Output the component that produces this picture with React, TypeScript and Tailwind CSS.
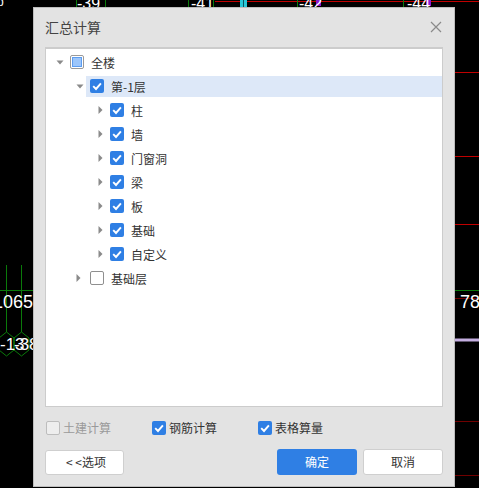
import React from "react";

const FONT = "font-['Noto_Sans_CJK_SC','Liberation_Sans',sans-serif]";

function Check() {
  return (
    <svg viewBox="0 0 14 14" className="w-[14px] h-[14px]" fill="none">
      <path d="M3.2 7.2 L6 10 L10.9 4.4" stroke="#fff" strokeWidth="1.9" />
    </svg>
  );
}

function Box({ state }: { state: "on" | "off" | "mixed" | "disabled" }) {
  if (state === "on")
    return (
      <span className="block w-[14px] h-[14px] shrink-0 rounded-[2px] bg-[#2f7fe4]">
        <Check />
      </span>
    );
  if (state === "mixed")
    return (
      <span className="flex items-center justify-center w-[14px] h-[14px] shrink-0 rounded-[2px] border border-[#9a9a9a] bg-white">
        <span className="block w-[10px] h-[10px] bg-[#9cc6fb] border border-[#5d9df0]" />
      </span>
    );
  if (state === "disabled")
    return <span className="block w-[14px] h-[14px] shrink-0 rounded-[2px] border border-[#bdbdbd] bg-[#eeeeee]" />;
  return <span className="block w-[14px] h-[14px] shrink-0 rounded-[2px] border border-[#8f8f8f] bg-white" />;
}

function Arrow({ open }: { open: boolean }) {
  return open ? (
    <svg viewBox="0 0 8 5" className="w-[8px] h-[5px] shrink-0">
      <path d="M0.5 0.5 H7.5 L4 4.5 Z" fill="#8a8a8a" />
    </svg>
  ) : (
    <svg viewBox="0 0 5 8" className="w-[5px] h-[8px] shrink-0">
      <path d="M0.5 0 V8 L4.5 4 Z" fill="#8a8a8a" />
    </svg>
  );
}

type Row = { label: string; level: 0 | 1 | 2; open: boolean; state: "on" | "off" | "mixed"; selected?: boolean };

const rows: Row[] = [
  { label: "全楼", level: 0, open: true, state: "mixed" },
  { label: "第-1层", level: 1, open: true, state: "on", selected: true },
  { label: "柱", level: 2, open: false, state: "on" },
  { label: "墙", level: 2, open: false, state: "on" },
  { label: "门窗洞", level: 2, open: false, state: "on" },
  { label: "梁", level: 2, open: false, state: "on" },
  { label: "板", level: 2, open: false, state: "on" },
  { label: "基础", level: 2, open: false, state: "on" },
  { label: "自定义", level: 2, open: false, state: "on" },
  { label: "基础层", level: 1, open: false, state: "off" },
];

const indent = ["pl-[10px]", "pl-[30px]", "pl-[52px]"];
const arrowSlot = ["w-[14px]", "w-[14px]", "w-[12px]"];

function TreeRow({ row }: { row: Row }) {
  return (
    <div className={`flex items-center h-[24px] ${indent[row.level]}`}>
      <span className={`flex items-center shrink-0 ${arrowSlot[row.level]}`}>
        <Arrow open={row.open} />
      </span>
      <div className={`flex items-center grow h-[21px] -ml-[4px] pl-[4px] ${row.selected ? "bg-[#dde8f8]" : ""}`}>
        <Box state={row.state} />
        <span className="ml-[7px] text-[12px] leading-[21px] text-[#333333]">{row.label}</span>
      </div>
    </div>
  );
}

function Option({ state, label, className }: { state: "on" | "disabled"; label: string; className: string }) {
  return (
    <div className={`flex items-center ${className}`}>
      <Box state={state} />
      <span className={`ml-[3px] text-[12px] leading-[14px] ${state === "disabled" ? "text-[#9a9a9a]" : "text-[#333333]"}`}>{label}</span>
    </div>
  );
}

function CadBackground() {
  return (
    <svg className="absolute inset-0" width="479" height="488" viewBox="0 0 479 488">
      <g stroke="#c00000" strokeWidth="1">
        <line x1="215" y1="1.5" x2="479" y2="1.5" />
        <line x1="455" y1="72.5" x2="479" y2="72.5" />
        <line x1="455" y1="156.5" x2="479" y2="156.5" />
        <line x1="455" y1="224.5" x2="479" y2="224.5" />
        <line x1="455" y1="298.5" x2="479" y2="298.5" stroke="#700000" />
        <line x1="455" y1="421.5" x2="479" y2="421.5" stroke="#700000" />
        <line x1="455" y1="475.5" x2="479" y2="475.5" stroke="#700000" />
      </g>
      <g stroke="#0a7a0a" fill="none">
        <line x1="455" y1="290.5" x2="479" y2="290.5" />
        <line x1="0" y1="290.5" x2="33" y2="290.5" />
        <line x1="6.5" y1="265" x2="6.5" y2="332" />
        <line x1="21.5" y1="265" x2="21.5" y2="332" />
        <path d="M6.5 332 L14 338 V350 L6.5 356 L-1 350 V338 Z M21.5 332 L29 338 V350 L21.5 356 L14 350 V338 Z" />
        <path d="M76.5 0 V7 M105.5 0 V7 M188.5 0 V7 M213.5 0 V7 M297.5 0 V7 M403.5 0 V7" />
      </g>
      <line x1="455" y1="340" x2="479" y2="340" stroke="#c4aee0" strokeWidth="3" />
      <rect x="240" y="0" width="7" height="7" fill="#28c8d8" />
      <rect x="243" y="0" width="1" height="7" fill="#0a5560" />
      <rect x="316" y="0" width="5" height="6" fill="#8a18d0" />
      <rect x="426" y="0" width="5" height="6" fill="#8a18d0" />
      <g fill="#ffffff" fontFamily="'Liberation Sans', sans-serif">
        <text x="-3" y="6" fontSize="12">p</text>
        <text x="77" y="9" fontSize="16">-39</text>
        <text x="191" y="9" fontSize="16">-41</text>
        <text x="299" y="9" fontSize="16">-42</text>
        <text x="407" y="9" fontSize="16">-44</text>
        <text x="-7" y="308" fontSize="18">1065</text>
        <text x="460" y="308" fontSize="18">78</text>
        <text x="0" y="350" fontSize="17">-13</text>
        <text x="14" y="350" fontSize="17">-38</text>
      </g>
    </svg>
  );
}

export default function App() {
  return (
    <div className={`relative w-[479px] h-[488px] overflow-hidden bg-black ${FONT}`}>
      <CadBackground />
      <div className="absolute left-[33px] top-[7px] w-[422px] h-[480px] flex flex-col bg-[#e3e3e3] border border-[#bdbdbd] pl-[11px] pr-[11px]">
        <div className="flex items-center justify-between h-[39px] shrink-0 pb-[1px]">
          <span className="text-[14px] leading-[20px] text-[#444444]">汇总计算</span>
          <svg viewBox="0 0 12 12" className="w-[12px] h-[12px] mr-[1px]" fill="none" stroke="#8a8a8a" strokeWidth="1.2">
            <path d="M1 1 L11 11 M11 1 L1 11" />
          </svg>
        </div>
        <div className="h-[360px] shrink-0 bg-white border border-[#cccccc] border-t-2 pt-[1px]">
          {rows.map((r) => (
            <TreeRow key={r.label} row={r} />
          ))}
        </div>
        <div className="flex items-center h-[14px] mt-[14px] shrink-0 pl-[1px]">
          <Option state="disabled" label="土建计算" className="w-[106px]" />
          <Option state="on" label="钢筋计算" className="w-[106px]" />
          <Option state="on" label="表格算量" className="w-[106px]" />
        </div>
        <div className="flex items-center mt-[14px] shrink-0">
          <button className="w-[79px] h-[25px] pl-[3px] rounded-[3px] bg-white border border-[#cfcfcf] text-[12px] text-[#333333]">&lt; &lt;选项</button>
          <button className="ml-[153px] w-[80px] h-[26px] rounded-[3px] bg-[#2f7fe4] text-[12px] text-white">确定</button>
          <button className="ml-[6px] w-[80px] h-[26px] rounded-[3px] bg-white border border-[#cfcfcf] text-[12px] text-[#333333]">取消</button>
        </div>
      </div>
    </div>
  );
}
